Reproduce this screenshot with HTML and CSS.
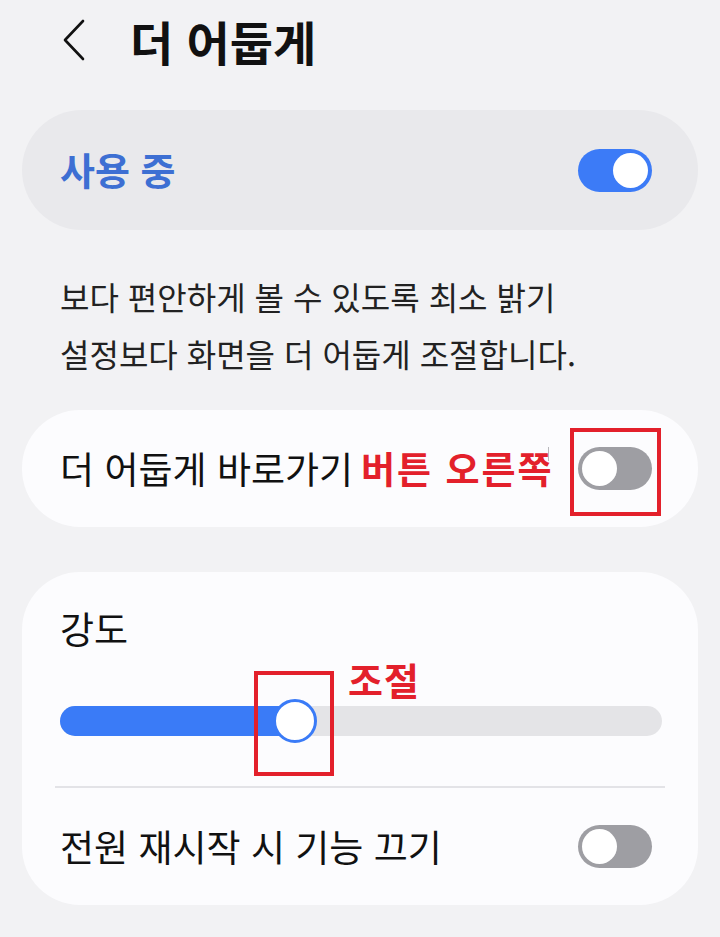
FILE: index.html
```html
<!DOCTYPE html>
<html lang="ko">
<head>
<meta charset="utf-8">
<link rel="stylesheet" href="styles.css">
</head>
<body>
<div class="page">
  <header class="header">
    <svg class="back" width="26" height="44" viewBox="0 0 26 44"><polyline points="22,3 4,22 22,41" fill="none" stroke="#111" stroke-width="2.6" stroke-linecap="round" stroke-linejoin="round"/></svg>
    <h1 class="title">더 어둡게</h1>
  </header>

  <section class="card card-on">
    <span class="on-label">사용 중</span>
    <span class="toggle toggle-on"><span class="knob"></span></span>
  </section>

  <p class="desc">보다 편안하게 볼 수 있도록 최소 밝기<br>설정보다 화면을 더 어둡게 조절합니다.</p>

  <section class="card card-row">
    <span class="label">더 어둡게 바로가기<span class="note">버튼 오른쪽</span></span>
    <span class="caret"></span>
    <span class="toggle toggle-off"><span class="knob"></span></span>
    <span class="redbox redbox-toggle"></span>
  </section>

  <section class="card card-big">
    <div class="big-top">
      <div class="label">강도</div>
      <div class="slider">
        <div class="fill" style="width:232px"></div>
        <div class="thumb" style="left:213px"></div>
      </div>
      <span class="note note-adjust">조절</span>
      <span class="redbox redbox-thumb"></span>
    </div>
    <div class="divider"></div>
    <div class="big-row">
      <span class="label">전원 재시작 시 기능 끄기</span>
      <span class="toggle toggle-off"><span class="knob"></span></span>
    </div>
  </section>
</div>
</body>
</html>
```

FILE: styles.css
```css
html, body {
  margin: 0;
  padding: 0;
  background: #f2f2f4;
}
body {
  font-family: "Noto Sans CJK KR", "Noto Sans", sans-serif;
  color: #111;
}
.page {
  width: 720px;
  height: 937px;
  overflow: hidden;
}
.header {
  display: flex;
  align-items: center;
  height: 84px;
  padding-left: 61px;
}
.back {
  display: block;
  margin-top: -4px;
}
.title {
  margin: 0 0 0 43px;
  font-size: 47px;
  font-weight: 700;
  letter-spacing: 0;
  line-height: 1;
  margin-top: -4px;
}
.card {
  margin: 0 22px;
  background: #fcfcfe;
  position: relative;
}
.card-on {
  margin-top: 26px;
  height: 120px;
  border-radius: 60px;
  background: #e9e9ec;
  display: flex;
  align-items: center;
  justify-content: space-between;
  padding: 0 46px 0 38px;
}
.on-label {
  color: #3d6fd3;
  font-size: 38px;
  font-weight: 700;
  line-height: 1;
  margin-top: -2px;
}
.toggle {
  width: 74px;
  height: 43px;
  border-radius: 22px;
  display: flex;
  align-items: center;
  padding: 0 4px;
  box-sizing: border-box;
  flex: none;
}
.toggle .knob {
  width: 35px;
  height: 35px;
  border-radius: 50%;
  background: #fff;
}
.toggle-on {
  background: #3c7bf7;
  justify-content: flex-end;
}
.toggle-off {
  background: #9e9ea3;
  justify-content: flex-start;
}
.desc {
  margin: 0;
  padding: 38px 0 0 60px;
  height: 180px;
  box-sizing: border-box;
  font-size: 32px;
  line-height: 57px;
  color: #222;
}
.card-row {
  margin-top: 0;
  height: 117px;
  border-radius: 58px;
  display: flex;
  align-items: center;
  justify-content: space-between;
  padding: 0 46px 0 38px;
}
.label {
  font-size: 37px;
  line-height: 1;
  color: #111;
}
.note {
  color: #e3202b;
  font-weight: 700;
  margin-left: 8px;
  font-size: 37px;
  letter-spacing: 2px;
}
.caret {
  position: absolute;
  left: 526px;
  top: 37px;
  width: 1px;
  height: 14px;
  background: #b8b8bc;
}
.redbox {
  position: absolute;
  border: 4px solid #e3202b;
  box-sizing: border-box;
}
.redbox-toggle {
  left: 548px;
  top: 18px;
  width: 91px;
  height: 88px;
}
.card-big {
  margin-top: 45px;
  height: 333px;
  border-radius: 58px;
  padding: 0 33px;
}
.big-top {
  position: relative;
  height: 214px;
  padding: 38px 0 0 5px;
  box-sizing: border-box;
}
.slider {
  position: relative;
  margin-top: 59px;
  width: 602px;
  height: 30px;
  border-radius: 15px;
  background: #e4e4e7;
}
.fill {
  height: 30px;
  border-radius: 15px 0 0 15px;
  background: #3a7bf7;
}
.thumb {
  position: absolute;
  top: -7px;
  width: 38px;
  height: 38px;
  border: 3px solid #3a7bf7;
  border-radius: 50%;
  background: #fff;
}
.note-adjust {
  position: absolute;
  left: 293px;
  top: 88px;
  margin: 0;
  font-size: 38px;
  letter-spacing: 1px;
  line-height: 1;
}
.redbox-thumb {
  left: 199px;
  top: 99px;
  width: 80px;
  height: 105px;
}
.divider {
  height: 2px;
  background: #e3e3e7;
}
.big-row {
  display: flex;
  align-items: center;
  justify-content: space-between;
  height: 117px;
  padding: 0 13px 0 5px;
}
```
